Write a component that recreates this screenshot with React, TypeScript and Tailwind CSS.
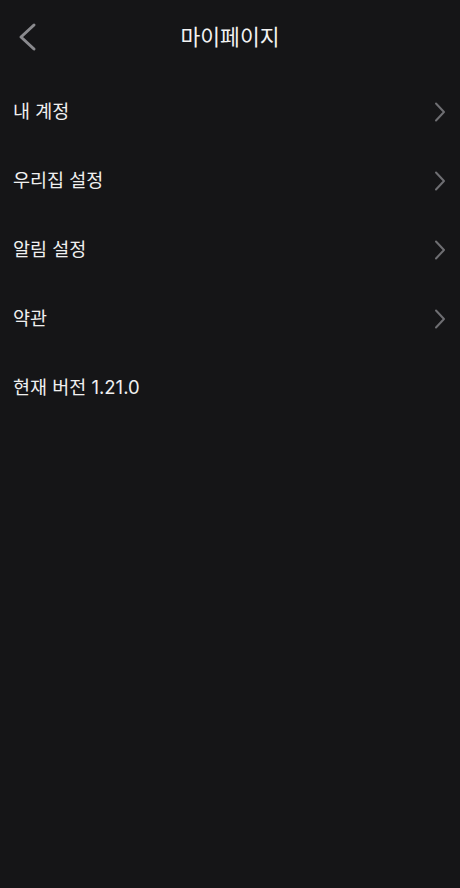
import React from "react";

const Chevron = () => (
  <svg width="12" height="20" viewBox="0 0 12 20" fill="none" className="shrink-0">
    <path d="M2 1.5 L10 10 L2 18.5" stroke="#6e6e72" strokeWidth="2" strokeLinecap="round" strokeLinejoin="round" />
  </svg>
);

const items = ["내 계정", "우리집 설정", "알림 설정", "약관"];

export default function App() {
  return (
    <div
      className="w-[460px] h-[888px] bg-[#151517] text-white overflow-hidden"
      style={{ fontFamily: 'Inter, "Noto Sans CJK KR", sans-serif' }}
    >
      <div className="relative h-[76px] flex items-center justify-center pb-[1px]">
        <div className="absolute left-[17px] top-[22px]">
          <svg width="20" height="30" viewBox="0 0 20 30" fill="none">
            <path d="M17 3 L4 15 L17 27" stroke="#8a8a8e" strokeWidth="3" strokeLinecap="round" strokeLinejoin="round" />
          </svg>
        </div>
        <span className="text-[21.5px] leading-none text-[#f2f2f2]">마이페이지</span>
      </div>
      <div className="flex flex-col pt-[1px]">
        {items.map((t) => (
          <div key={t} className="h-[69px] flex items-center justify-between pl-[13px] pr-[14px]">
            <span className="text-[18.5px] text-[#f0f0f0]">{t}</span>
            <Chevron />
          </div>
        ))}
        <div className="h-[69px] flex items-center pl-[13px]">
          <span className="text-[18.5px] text-[#f0f0f0]">현재 버전 1.21.0</span>
        </div>
      </div>
    </div>
  );
}
